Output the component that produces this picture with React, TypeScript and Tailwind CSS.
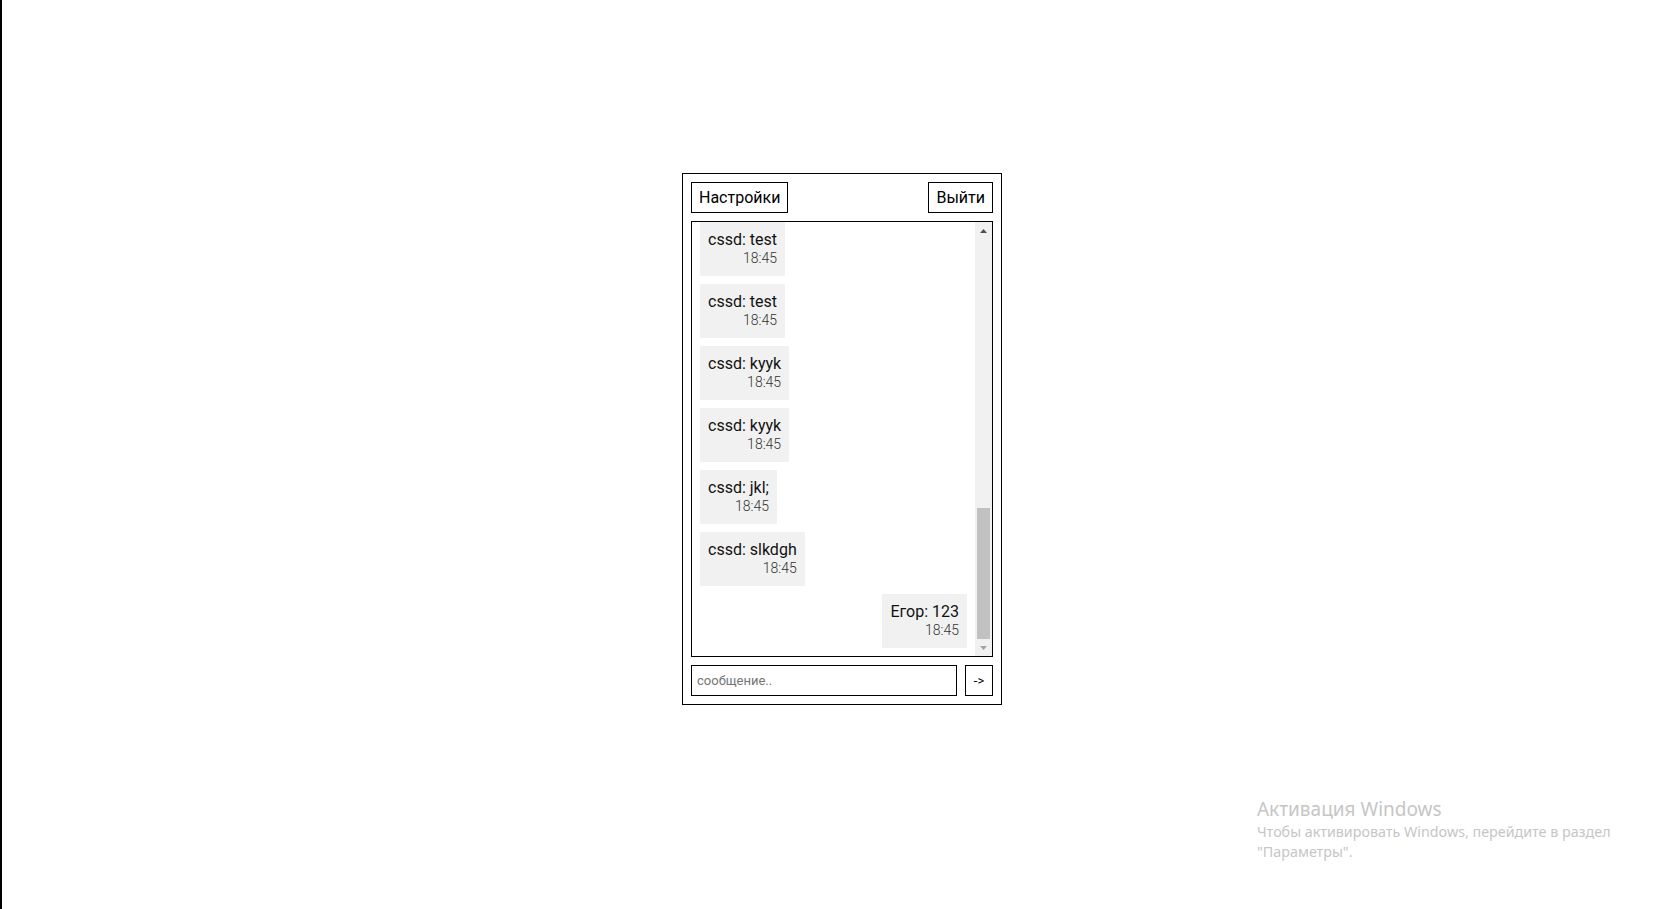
import React from "react";

type Msg = { author: string; text: string; time: string; mine?: boolean };

const messages: Msg[] = [
  { author: "cssd", text: "test", time: "18:45" },
  { author: "cssd", text: "test", time: "18:45" },
  { author: "cssd", text: "kyyk", time: "18:45" },
  { author: "cssd", text: "kyyk", time: "18:45" },
  { author: "cssd", text: "jkl;", time: "18:45" },
  { author: "cssd", text: "slkdgh", time: "18:45" },
  { author: "Егор", text: "123", time: "18:45", mine: true },
];

const Bubble: React.FC<{ msg: Msg }> = ({ msg }) => (
  <div
    className={`flex shrink-0 flex-col bg-[#f1f1f1] p-2 ${
      msg.mine ? "self-end" : "self-start"
    }`}
  >
    <p className="text-[16px] leading-[19px] text-[#111]">
      {msg.author}: {msg.text}
    </p>
    <p className="text-right text-[14px] font-light leading-[19px] text-[#333]">{msg.time}</p>
  </div>
);

const ScrollBar: React.FC = () => (
  <div className="flex w-[17px] shrink-0 flex-col bg-[#f1f1f1]">
    <div className="flex h-[17px] items-center justify-center">
      <svg width="7" height="4" viewBox="0 0 7 4">
        <path d="M3.5 0 L7 4 L0 4 Z" fill="#505050" />
      </svg>
    </div>
    <div className="flex flex-1 flex-col justify-end">
      <div className="mx-[2px] h-[131px] bg-[#c1c1c1]" />
    </div>
    <div className="flex h-[17px] items-center justify-center">
      <svg width="7" height="4" viewBox="0 0 7 4">
        <path d="M0 0 L7 0 L3.5 4 Z" fill="#a3a3a3" />
      </svg>
    </div>
  </div>
);

const Chat: React.FC = () => {
  return (
    <div className="flex h-[532px] w-[320px] flex-col gap-2 border border-black p-2 font-['Roboto',sans-serif] text-black">
      <div className="flex items-center justify-between">
        <button className="h-[31px] border border-black bg-white px-[7px] text-[16px]">
          Настройки
        </button>
        <button className="h-[31px] border border-black bg-white px-[7px] text-[16px]">
          Выйти
        </button>
      </div>

      <div className="flex h-[436px] border border-black">
        <div className="flex flex-1 flex-col gap-2 overflow-hidden px-2">
          {messages.map((m, i) => (
            <Bubble key={i} msg={m} />
          ))}
        </div>
        <ScrollBar />
      </div>

      <div className="flex gap-2">
        <input
          className="h-[31px] min-w-0 flex-1 border border-black px-[5px] text-[13px] outline-none placeholder:text-[#757575]"
          placeholder="сообщение.."
        />
        <button className="h-[31px] w-[28px] border border-black bg-white text-[13px]">
          -&gt;
        </button>
      </div>
    </div>
  );
};

export default function App() {
  return (
    <div className="relative flex min-h-screen bg-white">
      <div className="w-[2px] shrink-0 bg-black" />
      <div className="pl-[680px] pt-[173px]">
        <Chat />
      </div>

      {/* watermark */}
      <div className="absolute left-[1257px] top-[797px] font-['Noto_Sans',sans-serif] text-[#c6c6c6]">
        <p className="text-[19px] leading-[24px]">Активация Windows</p>
        <p className="pt-px text-[14.3px] leading-[20px]">
          Чтобы активировать Windows, перейдите в раздел
          <br />
          "Параметры".
        </p>
      </div>
    </div>
  );
}
